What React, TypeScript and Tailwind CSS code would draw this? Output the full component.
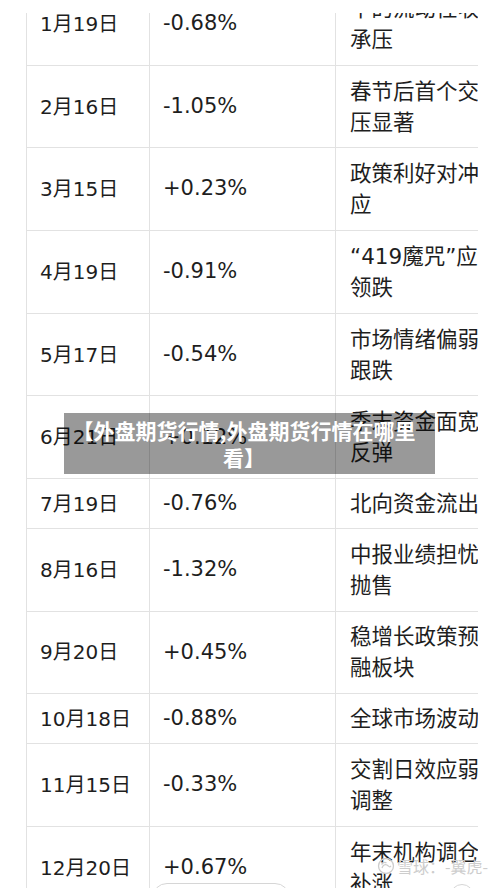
import React from "react";

type Row = { date: string; pct: string; l1: string; l2?: string };

const rows: Row[] = [
  { date: "1月19日", pct: "-0.68%", l1: "中的流动性收紧", l2: "承压" },
  { date: "2月16日", pct: "-1.05%", l1: "春节后首个交易日承", l2: "压显著" },
  { date: "3月15日", pct: "+0.23%", l1: "政策利好对冲效", l2: "应" },
  { date: "4月19日", pct: "-0.91%", l1: "“419魔咒”应验", l2: "领跌" },
  { date: "5月17日", pct: "-0.54%", l1: "市场情绪偏弱", l2: "跟跌" },
  { date: "6月21日", pct: "+0.12%", l1: "季末资金面宽松", l2: "反弹" },
  { date: "7月19日", pct: "-0.76%", l1: "北向资金流出" },
  { date: "8月16日", pct: "-1.32%", l1: "中报业绩担忧", l2: "抛售" },
  { date: "9月20日", pct: "+0.45%", l1: "稳增长政策预期金", l2: "融板块" },
  { date: "10月18日", pct: "-0.88%", l1: "全球市场波动" },
  { date: "11月15日", pct: "-0.33%", l1: "交割日效应弱", l2: "调整" },
  { date: "12月20日", pct: "+0.67%", l1: "年末机构调仓", l2: "补涨" },
];

const numFont = { fontFamily: "'DejaVu Sans','Noto Sans CJK SC',sans-serif" };
const cjkFont = { fontFamily: "'Noto Sans CJK SC','Noto Sans',sans-serif" };

export default function App() {
  return (
    <div className="relative w-[500px] h-[888px] overflow-hidden bg-white text-[#1e1e1e]">
      <div className="relative z-10 h-[13px] bg-white" />
      <div className="pl-[26px]">
        <div className="-mt-[30px] w-[452px] overflow-hidden border-l border-[#e2e2e2]">
          {rows.map((r, i) => (
            <div
              key={i}
              className={
                "flex border-b border-[#e2e2e2] " +
                (r.l2 ? "h-[82.7px]" : "h-[49.8px]")
              }
            >
              <div
                className="flex w-[123px] shrink-0 items-center border-r border-[#e2e2e2] pl-[13px] text-[20px]"
                style={numFont}
              >
                {r.date}
              </div>
              <div
                className="flex w-[186px] shrink-0 items-center border-r border-[#e2e2e2] pl-[13px] text-[21px]"
                style={numFont}
              >
                {r.pct}
              </div>
              <div
                className="flex min-w-0 flex-1 flex-col justify-center overflow-hidden whitespace-nowrap pl-[14px] text-[21.5px] leading-[31px]"
                style={numFont}
              >
                <div>{r.l1}</div>
                {r.l2 && <div>{r.l2}</div>}
              </div>
            </div>
          ))}
        </div>
      </div>

      {/* title banner */}
      <div
        className="absolute left-[64px] top-[413px] flex h-[61px] w-[371px] items-center justify-center bg-black/40 pl-[6px] pr-[17px] text-center text-[21px] font-bold leading-[27px] text-white"
        style={cjkFont}
      >
        【外盘期货行情,外盘期货行情在哪里看】
      </div>

      {/* watermark */}
      <div
        className="absolute left-[377px] top-[854px] flex items-center gap-[2px] text-[16px] text-[#cdcdcd]"
        style={cjkFont}
      >
        <svg width="18" height="18" viewBox="0 0 18 18" fill="none" stroke="#cdcdcd" strokeWidth="1.3">
          <circle cx="9" cy="9" r="7.5" />
          <path d="M5 11c1-3 3-4 5-3s2 3 4 1" />
          <path d="M4.5 7.5c1.5-2 3.5-2.5 5-1.5" />
        </svg>
        <span>雪球：-翼虎-</span>
      </div>

      {/* bottom floating controls peeking */}
      <div className="absolute left-[152px] top-[883px] h-[30px] w-[138px] rounded-full border border-[#d6d6d6] bg-white/60" />
      <div className="absolute left-[450px] top-[884px] h-[24px] w-[24px] rounded-full border border-[#d6d6d6]" />
    </div>
  );
}
